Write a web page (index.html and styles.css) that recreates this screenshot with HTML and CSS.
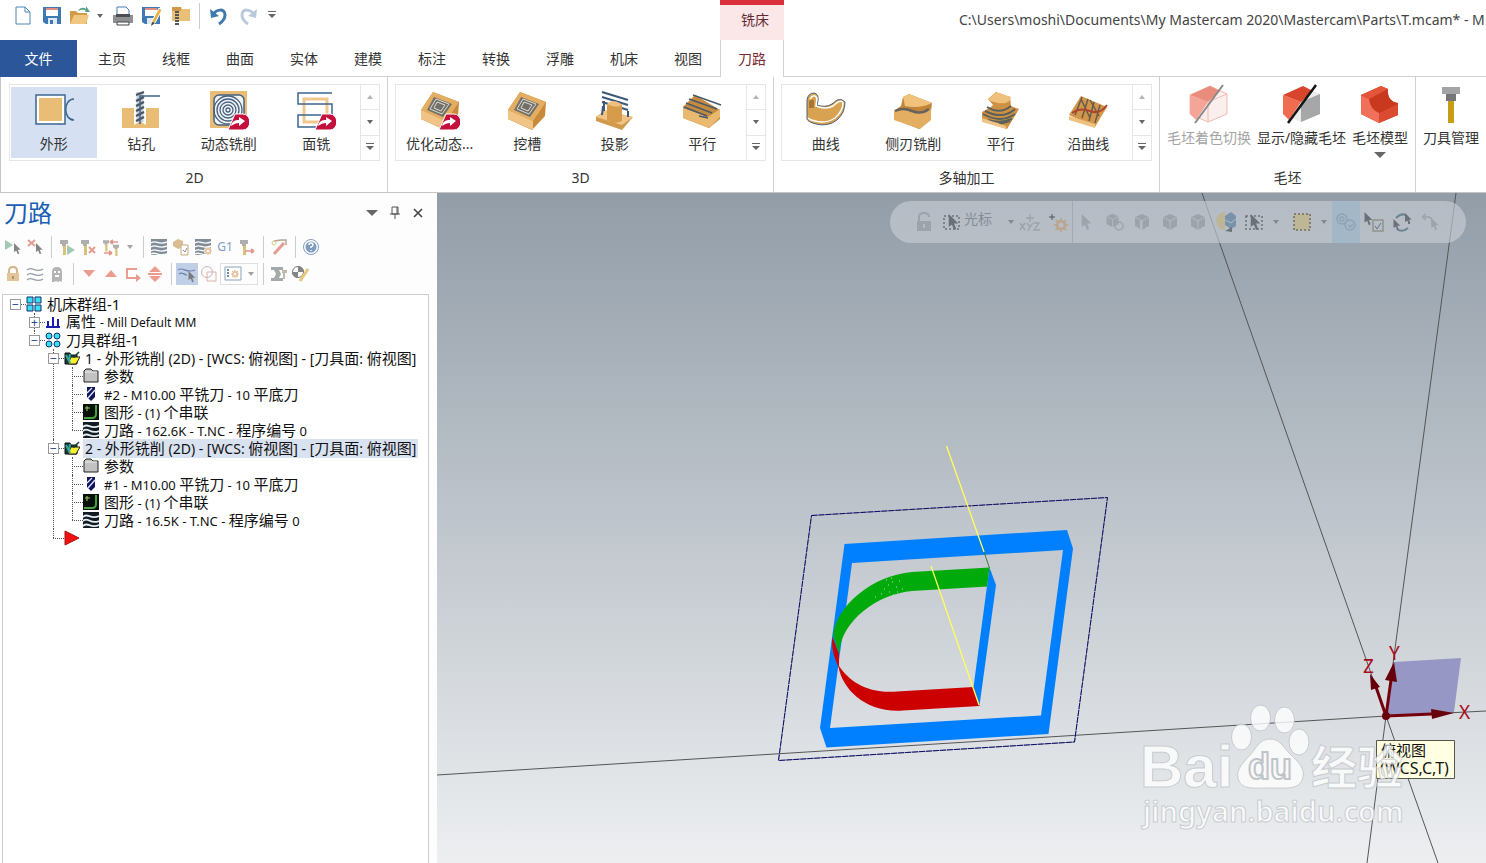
FILE: index.html
```
<!DOCTYPE html>
<html lang="zh-CN">
    <head>
        <meta charset="UTF-8">
        <title>Mastercam</title>
        <link rel="stylesheet" href="styles.css">
    </head>

    <body>
        <!-- shapes that are used more than once -->
        <svg class="defs" aria-hidden="true">
            <symbol id="cursor" viewBox="0 0 10 16"><path d="M1 0v12l3-2 2 5 2-1-2-5h4z"/></symbol>
            <symbol id="badge" viewBox="0 0 22 18"><path d="M8 1h8a6 7 0 0 1 0 16H1z" fill="#c4103c" stroke="#fff"/><path d="M4 13c1-5 4-6 8-6V4l6 4-6 5v-3c-3 0-5 1-8 3z" fill="#fff"/></symbol>
            <symbol id="tool" viewBox="0 0 8 16"><path d="M0 1h8v4H6v2H2V5H0z" fill="#9b9b9b"/><path d="M3 7h3v9H3z" fill="#cfb45c"/></symbol>
            <symbol id="waves" viewBox="0 0 16 16"><path d="M0 0h16v16H0z"/><path d="M0 4c5-4 7 3 16-1M0 8c5-4 7 3 16-1M0 12c5-4 7 3 16-1M0 15c5-3 7 3 16 0" fill="none" stroke="#fff" stroke-width="1.4"/></symbol>
            <symbol id="gear" viewBox="0 0 16 16"><circle cx="8" cy="8" r="4.5" fill="none" stroke="currentColor" stroke-width="3"/><path d="M8 0v3M8 13v3M0 8h3M13 8h3M2 2l3 3M11 11l3 3M14 2l-3 3M5 11l-3 3" stroke="currentColor" stroke-width="2"/></symbol>
            <symbol id="cube" viewBox="0 0 20 20"><path d="M10 2l7 3v9l-7 4-7-4V5z"/><path d="M3 5l7 4 7-4M10 9v9" fill="none" stroke="#b4bbc4"/></symbol>
            <symbol id="block" viewBox="0 0 40 40"><path d="M1 19L13 1l26 10-1 14-13 14L1 28z" fill="#c8893b"/><path d="M1 19L13 1l26 10-13 19z" fill="#e3ae62"/><path d="M1 19v9l25 11v-9z" fill="#f0c486"/></symbol>
            <symbol id="t-opfolder" viewBox="0 0 16 16"><path d="M1 3h5l1 2h6v9H1z" fill="#123a3c" stroke="#111"/><path d="M4 14l3-7h9l-4 7z" fill="#f6f12c" stroke="#222"/><path d="M2 5l4 8M6 4l-1 7" stroke="#35a49b" stroke-width="2"/><path d="M8 6l2 1 5-5" fill="none" stroke="#163f2c" stroke-width="1.5"/></symbol>
            <symbol id="t-folder" viewBox="0 0 16 16"><path d="M1 14V3l2-2h5l2 2h5v11z" fill="#c2c2c2" stroke="#222"/><path d="M2 4h12" stroke="#eee"/></symbol>
            <symbol id="t-mill" viewBox="0 0 16 16"><path d="M4 1h8v10l-4 4-4-4z" fill="#10145c"/><path d="M4 7l5-5M5 12l7-8" stroke="#dfe4ff" stroke-width="1.4"/></symbol>
            <symbol id="t-chain" viewBox="0 0 16 16"><path d="M0 0h16v16H0z" fill="#07110a"/><path d="M13 1v9q0 4-4 4H1" fill="none" stroke="#48a043" stroke-width="2"/><path d="M2 4h5M4 2v5" stroke="#9ccc66"/></symbol>
            <symbol id="t-path" viewBox="0 0 16 16"><path d="M0 0h16v16H0z" fill="#111b22"/><path d="M0 5c5-5 7 3 16-1M0 9c5-5 7 4 16 0M0 14c5-5 7 3 16-1" fill="none" stroke="#e8eef2" stroke-width="1.8"/></symbol>
        </svg>

        <header class="titlebar">
            <div class="quick">
                <button aria-label="新建"><svg width="18" height="20"><path d="M2 1h9l5 5v12H2zM11 1v5h5" fill="#fff" stroke="#4c86ba"/></svg></button>
                <button aria-label="保存"><svg width="20" height="20"><path d="M1 1h18v17H4l-3-2z" fill="#3f78b3"/><path d="M4 2h12v8H4z" fill="#fff"/><path d="M4 2h12v2H4z" fill="#e28d7f"/><path d="M6 12h9v6H6z" fill="#dfe9f3"/><path d="M8 14h3v4H8z" fill="#3f78b3"/></svg></button>
                <button class="with-caret" aria-label="打开"><svg width="22" height="20"><path d="M1 18V5h6l2 2h9v11z" fill="#d59a45"/><path d="M1 18l4-9h15l-3 9z" fill="#f0c681"/><path d="M9 5c2-4 6-4 8-2V0l4 6h-6l2-1c-3-2-5-1-8 0z" fill="#55a184"/></svg><i class="caret"></i></button>
                <button aria-label="打印"><svg width="22" height="20"><path d="M5 9V1h9l3 3v5" fill="#fff" stroke="#4b7bab"/><path d="M1 9h20v8H1z" fill="#8e9194"/><path d="M4 8h14v3H4z" fill="#4c4f52"/><path d="M5 16h12v3H5z" fill="#fff" stroke="#444"/></svg></button>
                <button aria-label="另存为"><svg width="22" height="20"><path d="M1 1h18v17H4l-3-2z" fill="#3f78b3"/><path d="M4 2h12v8H4z" fill="#fff"/><path d="M4 2h12v2H4z" fill="#e28d7f"/><path d="M6 12h8v6H6z" fill="#dfe9f3"/><path d="M18 2l3 2-7 13-4 3 1-5z" fill="#e7b145" stroke="#fff"/><path d="M11 16l-1 4 4-3z" fill="#444"/></svg></button>
                <button aria-label="压缩"><svg width="20" height="21"><path d="M1 1h9l1 2h8v12H1z" fill="#eabf77"/><path d="M1 1h9v4H1z" fill="#cf9b4a"/><path d="M6 5v15" stroke="#555" stroke-width="4" stroke-dasharray="2 1"/></svg></button>
                <span class="quick-sep"></span>
                <button aria-label="撤销"><svg width="20" height="20"><path d="M4 9c3-6 12-7 12 0 0 4-3 7-6 9" fill="none" stroke="#3f79ae" stroke-width="3"/><path d="M1 3l1 9 8-2z" fill="#3f79ae"/></svg></button>
                <button aria-label="重做"><svg width="20" height="20"><path d="M16 9C13 3 4 2 4 9c0 4 3 7 6 9" fill="none" stroke="#b8cadb" stroke-width="3"/><path d="M19 3l-1 9-8-2z" fill="#b8cadb"/></svg></button>
                <button class="more" aria-label="自定义"><i class="caret barred"></i></button>
            </div>
            <div class="context-tab">铣床</div>
            <div class="doc-title">C:\Users\moshi\Documents\My Mastercam 2020\Mastercam\Parts\T.mcam* - M</div>
        </header>

        <nav class="tabs">
            <button class="file-tab">文件</button>
            <button>主页</button>
            <button>线框</button>
            <button>曲面</button>
            <button>实体</button>
            <button>建模</button>
            <button>标注</button>
            <button>转换</button>
            <button>浮雕</button>
            <button>机床</button>
            <button>视图</button>
            <button class="active">刀路</button>
            <span class="tabs-rest"></span>
        </nav>

        <section class="ribbon">
            <div class="group">
                <div class="gallery">
                    <button class="tile selected"><svg width="40" height="40"><path d="M2 4h29v29H2z" fill="#fff" stroke="#3d6690" stroke-width="1.5"/><path d="M5 7h23v23H5z" fill="#e9bd76"/><path d="M40 8c-11 0-11 21 0 21" fill="none" stroke="#3d6690" stroke-width="1.5"/></svg>外形</button>
                    <button class="tile"><svg width="40" height="40"><path d="M1 17h12v17h12V17h13v20H1z" fill="#e9bd76"/><path d="M13 17v12l6 6 6-6V17" fill="#fff"/><path d="M13 34l6-4 6 4v3H13z" fill="#e9bd76"/><path d="M19 1v30" stroke="#c7cbd0" stroke-width="7"/><path d="M15 4l8-3M15 10l8-4M15 15l8-4M15 20l8-4M15 25l8-4M15 30l8-4" stroke="#49525b" stroke-width="2"/><path d="M19 33V5h20" fill="none" stroke="#3d6690" stroke-width="1.5"/></svg>钻孔</button>
                    <button class="tile"><svg width="40" height="40"><path d="M1 0h37v37H1z" fill="#e9bd76"/><rect x="5" y="4" width="30" height="30" rx="5" fill="#f1f4f7" stroke="#46617e" stroke-width="1.5"/><g fill="none" stroke="#46617e" stroke-width="1.3"><circle cx="19" cy="19" r="2"/><circle cx="19" cy="19" r="5"/><circle cx="19" cy="19" r="8"/><circle cx="19" cy="19" r="11"/><circle cx="19" cy="19" r="14"/></g><use href="#badge" x="18" y="22" width="22" height="18"/></svg>动态铣削</button>
                    <button class="tile"><svg width="40" height="40"><path d="M8 8h23v23H8z" fill="none" stroke="#f0c78c" stroke-width="3"/><path d="M36 2H2v11h34v11H2v12h20" fill="none" stroke="#3d6690" stroke-width="1.5"/><use href="#badge" x="18" y="22" width="22" height="18"/></svg>面铣</button>
                    <div class="scroller"><button aria-label="上"><i class="caret up"></i></button><button aria-label="下"><i class="caret"></i></button><button aria-label="更多"><i class="caret barred"></i></button></div>
                </div>
                <h2>2D</h2>
            </div>

            <div class="group">
                <div class="gallery">
                    <button class="tile"><svg width="40" height="40"><use href="#block" width="40" height="40"/><path d="M14 6l18 7-9 13-16-7z" fill="#71706a"/><path d="M16 8l13 5-7 10-12-5zM17 11l8 3-4 6-7-3z" fill="none" stroke="#dedbd0"/><use href="#badge" x="18" y="22" width="22" height="18"/></svg>优化动态...</button>
                    <button class="tile"><svg width="40" height="40"><use href="#block" width="40" height="40"/><path d="M14 6l18 7-9 13-16-7z" fill="#71706a"/><path d="M16 8l13 5-7 10-12-5zM17 11l8 3-4 6-7-3z" fill="none" stroke="#dedbd0"/></svg>挖槽</button>
                    <button class="tile"><svg width="40" height="40"><path d="M1 26l8-6 29 6-11 13-26-9z" fill="#d29a4c"/><path d="M1 26l26 8 11-8-27-7z" fill="#f0c486"/><path d="M7 1l26 8M7 6l26 8M7 11l26 8M8 15l-1 9M33 20v6M9 10v10" stroke="#3e5878" stroke-width="2"/><path d="M12 13q7-6 15 1v16q-8 4-15-1z" fill="#d69c4c"/><path d="M12 13q7-6 15 1-6 4-15-1z" fill="#efc080"/></svg>投影</button>
                    <button class="tile"><svg width="40" height="40"><path d="M1 16l12-12 25 15v9L27 37 1 27z" fill="#c58a3e"/><path d="M1 17l25 9 12-8v8L27 37 1 27z" fill="#eab970"/><path d="M11 4l28 10M7 8l28 10M4 12l26 10M2 16l23 9M17 25l9 2" stroke="#495a6a" stroke-width="1.5"/></svg>平行</button>
                    <div class="scroller"><button aria-label="上"><i class="caret up"></i></button><button aria-label="下"><i class="caret"></i></button><button aria-label="更多"><i class="caret barred"></i></button></div>
                </div>
                <h2>3D</h2>
            </div>

            <div class="group">
                <div class="gallery">
                    <button class="tile"><svg width="40" height="40"><path d="M1 9Q2 2 8 2q5 1 4 8l-1 4q8 3 15-1l5-4q5-2 8 2 0 11-8 18-9 7-21 4-8-2-9-5z" fill="#d9a251" stroke="#4f6379"/><path d="M4 8q4-6 7-1l-1 8q10 4 17 0l5-4q4-2 5 1 0 8-8 15-9 6-20 3-5-1-7-3" fill="none" stroke="#fff" stroke-width="1.5"/><path d="M3 10q4-3 5 0v7H3z" fill="#a57536"/></svg>曲线</button>
                    <button class="tile"><svg width="40" height="40"><path d="M1 20l7-5 2-9 6-3 23 9-2 17-11 9L1 28z" fill="#c18639"/><path d="M1 20l11-2 15 4 11-4v11l-11 9L1 29z" fill="#e3ad62"/><path d="M10 6l6-3 23 9q-12 6-27 3z" fill="#f0c27b"/><path d="M2 20q8-4 17 0 9 4 17-2" fill="none" stroke="#65635b" stroke-width="2.5"/></svg>侧刃铣削</button>
                    <button class="tile"><svg width="40" height="40"><path d="M1 21l9-5 2-2-5-6 8-7 14 5 1 9 8 3-12 20L1 30z" fill="#ce9143"/><path d="M7 9l8-8 15 5q-2 11-23 3z" fill="#efc17d"/><path d="M6 16q13 8 24-1M4 20q18 9 30-2M2 23q18 10 32 0M7 29q12 4 24-1M18 33l11-3" fill="none" stroke="#5a615c" stroke-width="2"/><path d="M1 27l24 8v3L1 31z" fill="#f0c486"/></svg>平行</button>
                    <button class="tile"><svg width="40" height="40"><path d="M1 24L13 5l26 11-12 20z" fill="#d2954a"/><path d="M1 25l26 8v4L1 29z" fill="#efc282"/><path d="M14 6L7 24M20 8l-6 19M26 11l-5 19M32 14l-5 18M13 8l9 19M22 9l9 16" stroke="#675b4b" stroke-width="1.5"/><path d="M4 22q8-6 18-2t17-6" fill="none" stroke="#ad462e" stroke-width="2"/></svg>沿曲线</button>
                    <div class="scroller"><button aria-label="上"><i class="caret up"></i></button><button aria-label="下"><i class="caret"></i></button><button aria-label="更多"><i class="caret barred"></i></button></div>
                </div>
                <h2>多轴加工</h2>
            </div>

            <div class="group stock">
                <div class="big-buttons">
                    <button disabled><svg width="40" height="40"><path d="M1 11L21 2l17 8v20l-19 8L1 30z" fill="#fbefed" stroke="#f1b9af"/><path d="M1 11l18 7-12 18-6-6z" fill="#f4a598"/><path d="M1 11L21 2l10 5-12 11z" fill="#ea8c7c"/><path d="M19 38V18l19-8" fill="none" stroke="#f1b9af"/><path d="M34 1L6 39" stroke="#8c8789" stroke-width="2"/></svg>毛坯着色切换</button>
                    <button><svg width="40" height="40"><path d="M1 11L21 2l17 8v20l-19 8L1 30z" fill="#ececec"/><path d="M19 18l19-8v20l-19 8z" fill="#a5a7a9"/><path d="M1 11l18 7-12 18-6-6z" fill="#f06c50"/><path d="M1 11L21 2l10 5-12 11z" fill="#d8452a"/><path d="M34 1L6 39" stroke="#151515" stroke-width="2.5"/></svg>显示/隐藏毛坯</button>
                    <button><svg width="40" height="40"><path d="M1 11L21 2l7 3q-1 12 10 14v12l-19 8L1 30z" fill="#c9391e"/><path d="M1 11l8 4q1 10 10 14v10L1 30z" fill="#f1705a"/><path d="M1 11L21 2l7 3-19 10z" fill="#e4563a"/><path d="M19 29l19-9v11l-19 8z" fill="#db4b31"/></svg>毛坯模型<i class="caret large"></i></button>
                </div>
                <h2>毛坯</h2>
            </div>

            <div class="group last">
                <div class="big-buttons">
                    <button><svg width="40" height="40"><path d="M11 3h18v7H11z" fill="#a2a4a6"/><path d="M15 10h10v7H15z" fill="#747678"/><path d="M17 17h6v22h-6z" fill="#c79d16"/></svg>刀具管理</button>
                </div>
            </div>
        </section>

        <main>
            <aside class="panel">
                <div class="panel-head">
                    <h1>刀路</h1>
                    <button aria-label="菜单"><i class="caret large"></i></button>
                    <button aria-label="固定"><svg width="12" height="14"><path d="M3 1h6v7H3zM1 8h10M6 8v5M8 1v7" fill="none" stroke="#555"/></svg></button>
                    <button aria-label="关闭"><svg width="12" height="12"><path d="M2 2l8 8M10 2l-8 8" stroke="#444" stroke-width="1.6"/></svg></button>
                </div>

                <div class="toolbar">
                    <button aria-label="选择全部"><svg width="18" height="18"><path d="M1 2l8 5-8 5z" fill="#8dbca5"/><use href="#cursor" x="9" y="5" width="8" height="12"/></svg></button>
                    <button aria-label="取消选择"><svg width="18" height="18"><path d="M2 2l7 6M9 2L2 8" stroke="#e08478" stroke-width="2"/><use href="#cursor" x="9" y="5" width="8" height="12"/></svg></button>
                    <span class="sep"></span>
                    <button aria-label="重新计算"><svg width="18" height="18"><use href="#tool" x="2" y="1" width="8" height="16"/><path d="M9 7l8 5-8 5z" fill="#8dbca5"/></svg></button>
                    <button aria-label="计算失效"><svg width="18" height="18"><use href="#tool" x="1" y="1" width="8" height="16"/><path d="M9 9l6 6M15 9l-6 6" stroke="#e08478" stroke-width="2"/></svg></button>
                    <button aria-label="替换刀具"><svg width="20" height="18"><use href="#tool" x="2" y="1" width="6" height="13"/><use href="#tool" x="12" y="6" width="6" height="12"/><path d="M9 4h8M9 4l3-2M9 4l3 2M3 15h8M11 15l-3-2M11 15l-3 2" fill="none" stroke="#df7d6f" stroke-width="1.6"/></svg></button>
                    <button class="drop" aria-label="展开"><i class="caret"></i></button>
                    <span class="sep"></span>
                    <button aria-label="模拟"><svg width="18" height="18"><use href="#waves" x="1" y="1" width="16" height="16" fill="#62727f"/></svg></button>
                    <button aria-label="验证"><svg width="18" height="18"><path d="M1 4l5-3 5 2v6l-5 2-5-3z" fill="#d0ad78"/><path d="M9 7h7v10H9z" fill="#fff" stroke="#b69961"/><path d="M11 12l2 2 2-4" fill="none" stroke="#777"/></svg></button>
                    <button aria-label="刀路选项"><svg width="18" height="18"><use href="#waves" x="1" y="1" width="16" height="16" fill="#62727f"/><circle cx="14" cy="13" r="4" fill="#fff"/><use href="#gear" x="10" y="9" width="8" height="8" color="#dfaa76"/></svg></button>
                    <button class="g1">G1</button>
                    <button aria-label="进给"><svg width="18" height="18"><use href="#tool" x="2" y="1" width="8" height="16"/><path d="M7 13h9M16 13l-3-2M16 13l-3 2" stroke="#df7d6f" stroke-width="1.6"/></svg></button>
                    <span class="sep"></span>
                    <button aria-label="编辑"><svg width="18" height="18"><path d="M4 16L14 5" stroke="#de8579" stroke-width="3"/><path d="M4 3l7-1M11 2h5v5" fill="none" stroke="#aa9077" stroke-width="1.5"/><circle cx="4" cy="5" r="2" fill="none" stroke="#dbbf6b"/></svg></button>
                    <span class="sep"></span>
                    <button aria-label="帮助"><svg width="18" height="18"><circle cx="9" cy="9" r="7.5" fill="#fff" stroke="#6286b2"/><circle cx="9" cy="9" r="5.5" fill="#6286b2"/><path d="M7 7q0-2 2-2t2 2q0 1-2 2v1M9 12v1" fill="none" stroke="#fff" stroke-width="1.4"/></svg></button>
                </div>

                <div class="toolbar">
                    <button aria-label="锁定"><svg width="18" height="18"><path d="M5 9V6q0-4 4-4t4 4v3" fill="none" stroke="#caa26b" stroke-width="2"/><path d="M3 8h12v8H3z" fill="#dcb981"/><path d="M9 11v3" stroke="#9c7745" stroke-width="2"/></svg></button>
                    <button aria-label="显示刀路"><svg width="18" height="18"><path d="M1 5c5-5 8 4 16-1M1 10c5-5 8 4 16-1M1 15c5-5 8 4 16-1" fill="none" stroke="#7b8791" stroke-width="1.4"/></svg></button>
                    <button aria-label="关闭后处理"><svg width="18" height="18"><path d="M4 17V7q0-5 5-5t5 5v10l-2-1-2 1-2-1-2 1z" fill="#a2a2a2"/><path d="M6 6h2v2H6zM10 6h2v2h-2zM7 10h4v2H7z" fill="#fff"/></svg></button>
                    <span class="sep"></span>
                    <button aria-label="下移"><svg width="18" height="18"><path d="M3 5h12l-6 7z" fill="#e88474"/></svg></button>
                    <button aria-label="上移"><svg width="18" height="18"><path d="M3 12h12L9 5z" fill="#e88474"/></svg></button>
                    <button aria-label="移动插入箭头"><svg width="18" height="18"><path d="M13 4H3v9h11" fill="none" stroke="#e88474" stroke-width="2"/><path d="M12 9l5 4-5 4z" fill="#e88474"/></svg></button>
                    <button aria-label="滚动"><svg width="18" height="18"><path d="M3 7l6-6 6 6zM2 8h14v2H2zM3 11h12l-6 6z" fill="#e88474"/></svg></button>
                    <span class="sep"></span>
                    <button class="on" aria-label="单一显示"><svg width="18" height="20"><path d="M0 6c5-4 8 4 17 0M1 10c3-3 5 1 8 1" fill="none" stroke="#5874a0" stroke-width="1.2"/><use href="#cursor" x="9" y="7" width="9" height="12"/></svg></button>
                    <button aria-label="关联图形"><svg width="18" height="18"><circle cx="7" cy="7" r="5.5" fill="none" stroke="#b6a9a0"/><path d="M7 7h9v9H7z" fill="none" stroke="#d59f92"/></svg></button>
                    <button class="combo" aria-label="显示选项"><svg width="18" height="16"><path d="M1 1h16v13H1z" fill="#fff" stroke="#708da9"/><path d="M3 4h2M3 7h2M3 10h2" stroke="#53738f" stroke-width="2"/><use href="#gear" x="7" y="4" width="8" height="8" color="#dfaa76"/></svg><i class="caret"></i></button>
                    <span class="sep"></span>
                    <button aria-label="导入"><svg width="18" height="18"><path d="M1 2h12v3H9l2 4-2 4h4v3H1v-3h3l2-4-2-4H1z" fill="#8f9698"/><path d="M12 5h5v3h-2v6h-2V8h-1z" fill="#b0aa92"/></svg></button>
                    <button aria-label="毛坯着色"><svg width="20" height="18"><circle cx="7" cy="7" r="5.5" fill="#fff" stroke="#555"/><path d="M7 7V1a6 6 0 0 1 6 6zM7 7v6a6 6 0 0 1-6-6z" fill="#666"/><path d="M17 4L9 16" stroke="#dfbb5d" stroke-width="3"/></svg></button>
                </div>

                <div class="tree">
                    <ul>
                        <li>
                            <div class="row"><button class="toggle">−</button><svg class="node" viewBox="0 0 16 16"><path d="M1 1h6v6H1zM9 1h6v6H9zM1 9h6v6H1zM9 9h6v6H9z" fill="#38dff4" stroke="#12306c"/></svg><span>机床群组-1</span></div>
                            <ul>
                                <li>
                                    <div class="row properties"><button class="toggle">+</button><svg class="node" viewBox="0 0 16 16"><path d="M1 13h14M3 12V7M8 12V3M13 12V5" stroke="#1c1cb0" stroke-width="2"/></svg><span>属性 <small>- Mill Default MM</small></span></div>
                                </li>
                                <li class="final">
                                    <div class="row"><button class="toggle">−</button><svg class="node" viewBox="0 0 16 16"><g fill="#38dff4" stroke="#12306c"><circle cx="4" cy="4" r="3"/><circle cx="12" cy="4" r="3"/><circle cx="4" cy="12" r="3"/><circle cx="12" cy="12" r="3"/></g></svg><span>刀具群组-1</span></div>
                                    <ul>
                                        <li>
                                            <div class="row operation"><button class="toggle">−</button><svg class="node"><use href="#t-opfolder"/></svg><span><small>1 - </small>外形铣削<small> (2D) - [WCS: </small>俯视图<small>] - [</small>刀具面<small>: </small>俯视图<small>]</small></span></div>
                                            <ul>
                                                <li class="leaf"><div class="row"><svg class="node"><use href="#t-folder"/></svg><span>参数</span></div></li>
                                                <li class="leaf"><div class="row"><svg class="node"><use href="#t-mill"/></svg><span><small>#2 - M10.00 </small>平铣刀<small> - 10 </small>平底刀</span></div></li>
                                                <li class="leaf"><div class="row"><svg class="node"><use href="#t-chain"/></svg><span>图形<small> - (1) </small>个串联</span></div></li>
                                                <li class="leaf final"><div class="row"><svg class="node"><use href="#t-path"/></svg><span>刀路<small> - 162.6K - T.NC - </small>程序编号<small> 0</small></span></div></li>
                                            </ul>
                                        </li>
                                        <li>
                                            <div class="row operation current"><button class="toggle">−</button><svg class="node"><use href="#t-opfolder"/></svg><span><small>2 - </small>外形铣削<small> (2D) - [WCS: </small>俯视图<small>] - [</small>刀具面<small>: </small>俯视图<small>]</small></span></div>
                                            <ul>
                                                <li class="leaf"><div class="row"><svg class="node"><use href="#t-folder"/></svg><span>参数</span></div></li>
                                                <li class="leaf"><div class="row"><svg class="node"><use href="#t-mill"/></svg><span><small>#1 - M10.00 </small>平铣刀<small> - 10 </small>平底刀</span></div></li>
                                                <li class="leaf"><div class="row"><svg class="node"><use href="#t-chain"/></svg><span>图形<small> - (1) </small>个串联</span></div></li>
                                                <li class="leaf final"><div class="row"><svg class="node"><use href="#t-path"/></svg><span>刀路<small> - 16.5K - T.NC - </small>程序编号<small> 0</small></span></div></li>
                                            </ul>
                                        </li>
                                        <li class="leaf final"><div class="row"><svg class="node" viewBox="0 0 16 16"><path d="M1 1l14 7-14 7z" fill="#f01010" stroke="#a11"/></svg></div></li>
                                    </ul>
                                </li>
                            </ul>
                        </li>
                    </ul>
                </div>
            </aside>

            <section class="viewport">
                <svg class="scene" viewBox="437 193 1049 670" preserveAspectRatio="xMidYMid slice">
                    <path d="M437 775L1386 716L1486 711M1202 193L1386 716L1438 863M1456 193L1386 716L1367 863" fill="none" stroke="#555" stroke-width="1"/>

                    <path d="M811.5 515.5L1107.5 497.5 1074.5 742 778.5 760.5z" fill="none" stroke="#8d90ae"/>
                    <path d="M811.5 515.5L1107.5 497.5 1074.5 742 778.5 760.5z" fill="none" stroke="#0c0c62" stroke-dasharray="6 1"/>
                    <path d="M844.5 544L1067 530 1073 548.5 1048.5 734 826.5 747.5 820 728zM852 563L830 728 1041 715.5 1063 550z" fill="#0080ff" fill-rule="evenodd"/>
                    <path d="M989.5 567.5L996 585 979.5 705.5 973.5 687z" fill="#0080ff"/>
                    <path d="M989.5 567.5L912 572C873 575 836 606 833 635L839 654C841 620 878 594 912 591L987 586.5z" fill="#00aa0a"/>
                    <path d="M832.5 637L839 654V666C849 681 867 694 897 691.5L973.5 687 979.5 706 903 710.5C866 713 843 690 838.5 667 834 657 831 648 832.5 637z" fill="#cd0000"/>
                    <path d="M884 589h1M888 585h1M892 582h1M896 587h1M889 592h1M881 594h1M899 581h1M893 595h1M886 580h1M902 589h1M875 597h1M891 578h1M897 592h1" stroke="#b9dcb8"/>
                    <path d="M946.5 446L984 552M931 566L979 705" stroke="#ffff58" stroke-width="1.3"/>
                    <path d="M984 552l5.5 16" stroke="#397a43"/>

                    <path d="M1394 662L1461 658 1454 712 1387 716z" fill="#9797c5"/>
                    <g class="axes">
                        <path d="M1386 716L1432 714M1386 716L1391 680M1386 716L1376 687" stroke="#75000c" stroke-width="3"/>
                        <path d="M1431 709l23 4-22 6zM1385 680l9-18 3 20zM1370 674l10 13-9 3z" fill="#68000b"/>
                        <circle cx="1386" cy="716" r="4" fill="#68000b"/>
                        <text x="1459" y="719">X</text>
                        <text x="1389" y="660">Y</text>
                        <text x="1363" y="673">Z</text>
                    </g>

                    <g class="tip">
                        <path d="M1376.5 740.5h78v38h-78z" fill="#ffffe1" stroke="#55554a"/>
                        <text x="1381" y="756">俯视图</text>
                        <text class="tip-planes" x="1380" y="774">(WCS,C,T)</text>
                    </g>

                    <g class="watermark">
                        <text class="wm-big" x="1140" y="787">Bai</text>
                        <ellipse cx="1241.5" cy="737" rx="10" ry="13"/>
                        <ellipse cx="1260.5" cy="718" rx="10" ry="13"/>
                        <ellipse cx="1284.5" cy="720" rx="10" ry="13"/>
                        <ellipse cx="1299" cy="742" rx="10" ry="13"/>
                        <path d="M1270 739c10 0 13 8 20 15 9 8 15 15 13 23-3 13-15 11-33 11s-29 2-32-10c-2-9 5-15 13-24 6-7 9-15 19-15z"/>
                        <text class="wm-du" x="1248" y="779">du</text>
                        <text class="wm-cn" x="1311" y="784">经验</text>
                        <text class="wm-url" x="1143" y="822">jingyan.baidu.com</text>
                    </g>
                </svg>

                <div class="selection-bar">
                    <button class="lock" aria-label="锁定"><svg width="18" height="20"><path d="M4 9V5q0-4 5-4t5 4" fill="none" stroke="currentColor" stroke-width="2"/><path d="M2 9h14v10H2z" fill="currentColor"/><path d="M9 12v4" stroke="#b4bbc4" stroke-width="2"/></svg></button>
                    <button class="cursor-mode"><svg class="dark" width="20" height="20"><path d="M2 4h15v13H2z" fill="none" stroke="currentColor" stroke-width="1.5" stroke-dasharray="2 2"/><use href="#cursor" x="5" y="2" width="12" height="17"/></svg><span>光标</span><i class="caret"></i></button>
                    <button class="xyz" aria-label="坐标"><svg width="22" height="20"><path d="M11 2v8M7 6h8M1 11l5 7M6 11l-5 7M8 11l3 4 3-4M11 15l-2 4M15 11h5l-5 7h6" fill="none" stroke="currentColor" stroke-width="1.3"/></svg></button>
                    <button aria-label="抓点设置"><svg width="20" height="20"><path d="M4 2v6M1 5h6" stroke="#555"/><use href="#gear" x="6" y="6" width="14" height="14" color="#baa58d"/></svg></button>
                    <span class="bar-sep"></span>
                    <button aria-label="选择"><svg width="20" height="20"><use href="#cursor" x="4" y="2" width="12" height="17"/></svg></button>
                    <button aria-label="实体选择"><svg width="20" height="20"><use href="#cube" width="17" height="17"/><circle cx="15" cy="14" r="4" fill="none" stroke="currentColor" stroke-width="1.5"/></svg></button>
                    <button aria-label="边界"><svg width="20" height="20"><use href="#cube" width="20" height="20"/><path d="M8 9h2v8H8z" fill="#b4bbc4"/></svg></button>
                    <button aria-label="面"><svg width="20" height="20"><use href="#cube" width="20" height="20"/></svg></button>
                    <button aria-label="主体"><svg width="20" height="20"><use href="#cube" width="20" height="20"/></svg></button>
                    <button aria-label="背面"><svg width="22" height="22"><path d="M10 1a9 9 0 0 0 0 18z" fill="#bdb596"/><path d="M10 5l6-4 5 4v10l-5 3-6-4z" fill="#7892aa"/><path d="M10 9l6 3 5-4" fill="none" stroke="#b4bbc4"/><path d="M10 20l7-4v5z" fill="#6c737b"/></svg></button>
                    <button class="dark" aria-label="窗选"><svg width="20" height="20"><path d="M2 4h16v13H2z" fill="none" stroke="currentColor" stroke-width="1.5" stroke-dasharray="2 2"/><use href="#cursor" x="5" y="2" width="12" height="17"/></svg></button>
                    <button class="drop" aria-label="选择方式"><i class="caret"></i></button>
                    <button class="window" aria-label="范围内"><svg width="20" height="20"><path d="M2 2h16v16H2z" fill="#beb795" stroke="#716c61" stroke-width="1.5" stroke-dasharray="2 2"/></svg></button>
                    <button class="drop" aria-label="窗口方式"><i class="caret"></i></button>
                    <button class="lit" aria-label="验证选择"><svg width="22" height="20"><g fill="none" stroke="currentColor" stroke-width="1.5"><circle cx="7" cy="7" r="5"/><circle cx="7" cy="7" r="2"/><circle cx="15" cy="13" r="5"/><path d="M13 13l2 2 3-3"/></g></svg></button>
                    <button class="dark" aria-label="快速选择"><svg width="22" height="22"><use href="#cursor" x="0" y="1" width="10" height="14"/><path d="M10 9h10v11H10z" fill="none" stroke="#91938c" stroke-width="1.5"/><path d="M12 15l2 3 4-6" fill="none" stroke="currentColor"/></svg></button>
                    <button class="dark" aria-label="反选"><svg width="22" height="20"><path d="M5 6q6-6 11-2M6 17q5 4 11-1M18 12v-3" fill="none" stroke="#6d8293" stroke-width="2"/><use href="#cursor" x="1" y="7" width="9" height="12"/><use href="#cursor" x="13" y="1" width="8" height="12"/></svg></button>
                    <button aria-label="选择最后"><svg width="20" height="20"><path d="M2 5h6q4 0 4 5M2 5l4-3M2 5l4 3" fill="none" stroke="currentColor" stroke-width="1.5"/><use href="#cursor" x="10" y="6" width="9" height="13"/></svg></button>
                </div>
            </section>
        </main>
    </body>
</html>
```

FILE: styles.css
```
* {
    box-sizing: border-box;
    padding: 0;
    margin: 0;
}

body {
    display: flex;
    flex-direction: column;
    height: 100vh;
    overflow: hidden;
    background: #fff;
    color: #333;
    font: 14px/20px "Noto Sans", "Noto Sans CJK SC", sans-serif;
}

button {
    display: flex;
    align-items: center;
    justify-content: center;
    border: 0;
    background: none;
    color: inherit;
    font: inherit;
}

svg {
    flex: none;
}

h1, h2 {
    font-weight: normal;
}

ul {
    list-style: none;
}

.defs {
    position: absolute;
    width: 0;
    height: 0;
}

.caret {
    flex: none;
    width: 0;
    height: 0;
    border: 3px solid transparent;
    border-top: 4px solid #666;
    border-bottom: 0;
}

.caret.up {
    border-top: 0;
    border-bottom: 4px solid #b5b5b5;
}

.caret.barred {
    position: relative;
    border-width: 4px 4px 0;
}

.caret.barred:before {
    content: "";
    position: absolute;
    top: -7px;
    left: -4px;
    width: 8px;
    height: 1px;
    background: #666;
}

.caret.large {
    border-width: 6px 6px 0;
}

/* title bar */

.titlebar {
    display: flex;
    height: 40px;
    flex: none;
}

.quick {
    display: flex;
    align-items: center;
    width: 720px;
    height: 32px;
    padding-left: 9px;
    gap: 2px;
}

.quick button {
    width: 27px;
    height: 24px;
}

.quick .with-caret {
    width: 38px;
    margin-right: 2px;
    gap: 6px;
}

.quick-sep {
    width: 1px;
    height: 26px;
    margin: 0 3px;
    background: #ccc;
}

.quick .more {
    width: 18px;
}

.context-tab {
    width: 64px;
    padding: 5px 0 0 6px;
    border-top: 5px solid #d9303c;
    background: #fbe7e8;
    color: #5f2a30;
    text-align: center;
}

.doc-title {
    flex: 1;
    padding: 10px 0 0 175px;
    overflow: hidden;
    white-space: nowrap;
    color: #444;
}

/* tabs */

.tabs {
    display: flex;
    flex: none;
    height: 37px;
}

.tabs button {
    width: 64px;
    padding-top: 1px;
    border-bottom: 1px solid #d2d2d2;
}

.tabs .file-tab {
    width: 77px;
    margin-right: 3px;
    border: 0;
    background: #2b579a;
    color: #fff;
}

.tabs .active {
    border: 1px solid #d2d2d2;
    border-width: 0 1px;
    color: #7a2a30;
}

.tabs-rest {
    flex: 1;
    border-bottom: 1px solid #d2d2d2;
}

/* ribbon */

.ribbon {
    display: flex;
    flex: none;
    height: 116px;
    padding-left: 1px;
    border: 1px solid #c6c6c6;
    border-width: 0 0 1px 1px;
}

.group {
    display: flex;
    flex-direction: column;
    align-items: center;
    flex: none;
    width: 386px;
    padding: 7px 7px 0;
    border-right: 1px solid #d0d0d0;
}

.group h2 {
    margin-top: 7px;
    font-size: 14px;
}

.gallery {
    display: flex;
    width: 100%;
    height: 77px;
    border: 1px solid #e6e6e6;
}

.tile {
    flex: 1;
    flex-direction: column;
    margin: 2px 1px;
    gap: 3px;
    white-space: nowrap;
}

.tile.selected {
    background: #d5e1f2;
}

.scroller {
    display: flex;
    flex-direction: column;
    width: 19px;
    border-left: 1px solid #e6e6e6;
}

.scroller button {
    flex: 1;
}

.scroller button + button {
    border-top: 1px solid #e6e6e6;
}

.stock {
    width: 256px;
}

.group.last {
    flex: 1;
    align-items: flex-start;
    border: 0;
}

.big-buttons {
    display: flex;
    height: 77px;
    gap: 6px;
    white-space: nowrap;
}

.big-buttons button {
    flex-direction: column;
    justify-content: flex-start;
    gap: 4px;
}

.big-buttons button:disabled {
    color: #a5a5a5;
}

/* toolpath panel */

main {
    display: flex;
    flex: 1;
    min-height: 0;
}

.panel {
    display: flex;
    flex-direction: column;
    flex: none;
    width: 437px;
    padding: 0 8px 0 2px;
    background: #fdfdfd;
}

.panel-head {
    display: flex;
    align-items: center;
    height: 40px;
    padding-left: 2px;
}

.panel-head h1 {
    flex: 1;
    color: #1a5fb4;
    font-size: 24px;
    line-height: 40px;
}

.panel-head button {
    width: 23px;
    height: 23px;
}

.toolbar {
    display: flex;
    align-items: center;
    height: 27px;
    fill: #666;
}

.toolbar svg {
    opacity: 0.8;
}

.toolbar button {
    width: 22px;
    height: 22px;
}

.toolbar .drop {
    width: 16px;
}

.toolbar .caret, .selection-bar .caret {
    opacity: 0.6;
}

.toolbar .on {
    background: #c0cee6;
}

.toolbar .g1 {
    color: #7e9cbc;
    font-size: 12px;
}

.toolbar .combo {
    width: 38px;
    border: 1px solid #e0e0e0;
    gap: 6px;
}

.sep {
    width: 1px;
    height: 22px;
    margin: 0 4px 0 5px;
    background: #ccc;
}

.tree {
    flex: 1;
    margin-top: 7px;
    padding: 0 0 0 7px;
    border: 1px solid #ccc;
    border-bottom: 0;
    background: #fff;
    color: #111;
}

.tree ul ul {
    padding-left: 19px;
}

.tree li {
    position: relative;
}

.row {
    display: flex;
    align-items: center;
    height: 18px;
    font-size: 15px;
    line-height: 18px;
    white-space: nowrap;
}

.row small {
    font-size: 13px;
}

.properties small {
    font-size: 12px;
}

.operation small {
    font-size: 14px;
}

.row span {
    padding: 0 2px;
    margin-left: 3px;
    white-space: pre;
}

.row.current span {
    background: #d9e2f0;
}

.toggle {
    position: relative;
    z-index: 1;
    width: 11px;
    height: 11px;
    margin-right: 5px;
    border: 1px solid #999;
    background: #fff;
    color: #234a8c;
    font-size: 12px;
    line-height: 9px;
}

.leaf .row {
    padding-left: 16px;
}

.node {
    width: 16px;
    height: 16px;
}

/* dotted connectors between the nodes */
.tree li:before {
    content: "";
    position: absolute;
    top: 9px;
    left: 5px;
    width: 11px;
    border-top: 1px dotted #555;
}

.tree li li:after {
    content: "";
    position: absolute;
    top: 0;
    bottom: 0;
    left: 5px;
    border-left: 1px dotted #555;
}

.tree li.final:after {
    bottom: auto;
    height: 9px;
}

/* graphics area */

.viewport {
    position: relative;
    flex: 1;
    min-width: 0;
    overflow: hidden;
    background: linear-gradient(#929da8, #edeff1);
}

.scene {
    display: block;
    width: 100%;
    height: 100%;
}

.axes text {
    fill: #a80d1b;
    font: 19px "Noto Sans", sans-serif;
}

.tip text {
    fill: #111;
    font: 15px "Noto Sans", "Noto Sans CJK SC", sans-serif;
}

.tip .tip-planes {
    font-size: 16px;
}

.watermark {
    fill: #fff;
    stroke: #c3c6ca;
    stroke-width: 1;
    opacity: 0.8;
}

.wm-big {
    font: bold 60px "Liberation Sans", sans-serif;
}

.wm-du {
    fill: #fff;
    stroke: #b9bdc2;
    stroke-width: 2;
    font: bold 36px "Liberation Sans", sans-serif;
}

.wm-cn {
    font: bold 46px "Noto Sans CJK SC", sans-serif;
}

.wm-url {
    font: 600 29px "Noto Sans", sans-serif;
}

.selection-bar {
    position: absolute;
    top: 8px;
    left: 453px;
    display: flex;
    align-items: center;
    height: 42px;
    padding: 0 22px 0 21px;
    border-radius: 21px;
    background: rgba(205, 208, 215, 0.6);
    color: #9ca3ab;
    fill: #9ca3ab;
    white-space: nowrap;
}

.selection-bar button {
    width: 28px;
    height: 42px;
}

.selection-bar .lock {
    width: 26px;
}

.selection-bar .drop {
    width: 16px;
}

.selection-bar .cursor-mode {
    width: 72px;
    margin-left: 5px;
    gap: 2px;
}

.cursor-mode span {
    flex: 1;
    height: 26px;
    text-align: left;
    color: #858c95;
}

.selection-bar .xyz {
    margin-left: 2px;
}

.selection-bar .window {
    margin-left: 4px;
}

.bar-sep {
    width: 1px;
    height: 42px;
    margin-right: -1px;
    background: #a2a9b2;
}

.selection-bar .dark {
    color: #6a7179;
    fill: #6a7179;
}

.selection-bar .lit {
    background: #a4b7c7;
    color: #8ea3b5;
}
```
